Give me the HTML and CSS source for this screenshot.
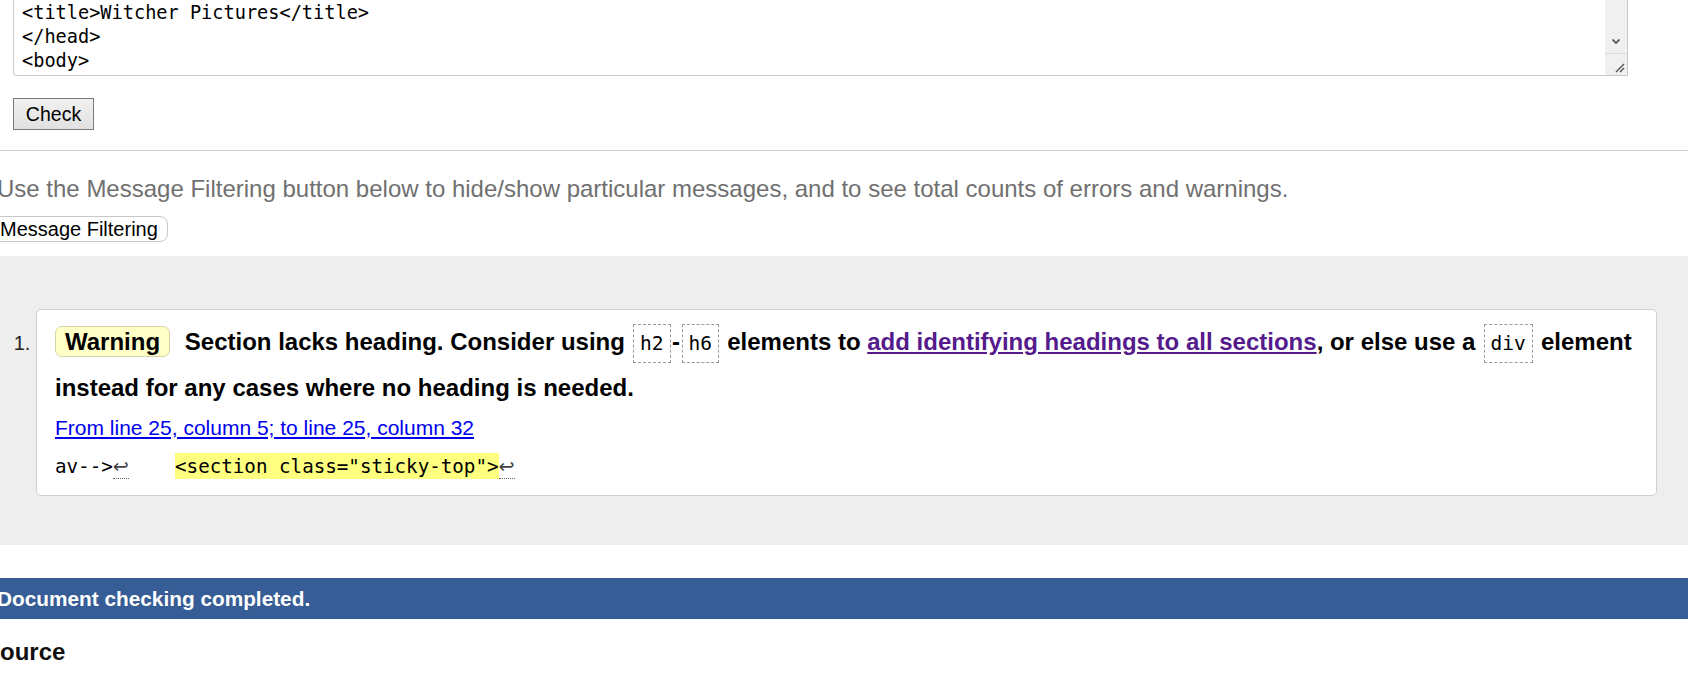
FILE: index.html
```html
<!DOCTYPE html>
<html lang="en">
<head>
<meta charset="utf-8">
<title>Nu Html Checker</title>
<link rel="stylesheet" href="styles.css">
</head>
<body>
<div class="page">
  <form class="checker">
    <div class="editor">
      <div class="editor-lines">
        <div class="ln">&lt;title&gt;Witcher Pictures&lt;/title&gt;</div>
        <div class="ln">&lt;/head&gt;</div>
        <div class="ln">&lt;body&gt;</div>
      </div>
      <div class="editor-scroll">
        <div class="scroll-track">
          <svg class="chev" width="10" height="7" viewBox="0 0 10 7"><path d="M1.5 1.5 L5 5 L8.5 1.5" fill="none" stroke="#606060" stroke-width="1.8"/></svg>
        </div>
        <div class="resizer">
          <svg width="21" height="21" viewBox="0 0 21 21"><path d="M18 10 L10 18 M18 14 L14 18" stroke="#555" stroke-width="1.4" fill="none"/></svg>
        </div>
      </div>
    </div>
    <button type="button" class="check-btn">Check</button>
  </form>
  <hr class="rule">
  <p class="filter-note">Use the Message Filtering button below to hide/show particular messages, and to see total counts of errors and warnings.</p>
  <button type="button" class="filter-btn">Message Filtering</button>
  <div class="results">
    <ol class="messages">
      <li class="msg-card">
        <p class="msg"><span class="badge">Warning</span> <span>Section lacks heading. Consider using <code class="kw">h2</code>-<code class="kw">h6</code> elements to <a class="doc-link" href="#">add identifying headings to all sections</a>, or else use a <code class="kw">div</code> element instead for any cases where no heading is needed.</span></p>
        <p class="location"><a class="loc-link" href="#">From line 25, column 5; to line 25, column 32</a></p>
        <p class="extract"><code>av--&gt;<span class="lf">↩</span>    <b class="hl">&lt;section class="sticky-top"&gt;</b><span class="lf">↩</span></code></p>
      </li>
    </ol>
  </div>
  <p class="done">Document checking completed.</p>
  <h2 class="source-h">Source</h2>
</div>
</body>
</html>
```
FILE: styles.css
```css
html, body {
  margin: 0;
  padding: 0;
  background: #fff;
  overflow: hidden;
}
body {
  font-family: "Liberation Sans", Arial, sans-serif;
  color: #000;
}
.page {
  margin-left: -3px;
}
.checker {
  padding-left: 16px;
}
.editor {
  box-sizing: border-box;
  width: 1615px;
  height: 76px;
  border: 1px solid #c9c9c9;
  border-top: none;
  border-bottom-left-radius: 4px;
  display: flex;
  background: #fff;
}
.editor-lines {
  flex: 1;
  padding: 1px 0 0 8px;
  font-family: "DejaVu Sans Mono", monospace;
  font-size: 18.6px;
  line-height: 24px;
}
.ln {
  white-space: pre;
  height: 24px;
}
.editor-scroll {
  width: 22px;
  display: flex;
  flex-direction: column;
  background: #f0f0f0;
}
.scroll-track {
  height: 54px;
  display: flex;
  align-items: flex-end;
  justify-content: center;
  padding-bottom: 8px;
  box-sizing: border-box;
  border-bottom: 1px solid #dcdcdc;
}
.resizer {
  flex: 1;
  background: #f0f0f0;
  display: flex;
  align-items: flex-end;
  justify-content: flex-end;
}
.resizer svg {
  display: block;
}
.check-btn {
  display: block;
  margin-top: 22px;
  width: 81px;
  height: 32px;
  padding: 0;
  font-family: "Liberation Sans", Arial, sans-serif;
  font-size: 19.5px;
  color: #000;
  background: linear-gradient(#f0f0f0, #e1e1e1);
  border: 1px solid #7a7a7a;
  border-radius: 0;
}
.rule {
  margin: 20px 0 0;
  border: none;
  border-top: 1px solid #cccccc;
  height: 0;
}
.filter-note {
  margin: 24px 0 0;
  font-size: 24px;
  line-height: 27px;
  color: #707070;
}
.filter-btn {
  display: block;
  margin: 14px 0 0 -4px;
  height: 26px;
  padding: 0 9px 0 6px;
  font-family: "Liberation Sans", Arial, sans-serif;
  font-size: 20px;
  line-height: 24px;
  color: #000;
  background: #fff;
  border: 1px solid #c8c8c8;
  border-radius: 8px;
}
.results {
  margin-top: 14px;
  background: #eeeeee;
  padding: 53px 31px 49px 0;
}
.messages {
  margin: 0;
  padding-left: 39px;
  font-size: 20px;
  color: #222;
}
.msg-card {
  background: #fff;
  border: 1px solid #cfcfcf;
  border-radius: 5px;
  padding: 10px 18px 16px;
}
.msg {
  margin: 0;
  font-size: 24px;
  font-weight: bold;
  line-height: 44px;
  color: #000;
}
.badge {
  display: inline-block;
  padding: 0 9px;
  line-height: 29px;
  background: #ffffc8;
  border: 1px solid #d8d3a6;
  border-radius: 7px;
  margin-right: 8px;
}
.kw {
  font-family: "DejaVu Sans Mono", monospace;
  font-weight: normal;
  font-size: 19.5px;
  padding: 7px 6px;
  margin: 0 1.5px;
  border: 1px dashed #9a9a9a;
}
.doc-link {
  color: #551a8b;
}
.location {
  margin: 6px 0 0;
  font-size: 21px;
  line-height: 24px;
}
.loc-link {
  color: #0000ee;
}
.extract {
  margin: 14px 0 0;
  line-height: 25px;
}
.extract code {
  font-family: "DejaVu Sans Mono", monospace;
  font-size: 19.2px;
  white-space: pre;
  color: #000;
}
.hl {
  font-weight: normal;
  background: #ffff80;
  padding: 2px 0 1px;
}
.lf {
  font-family: "DejaVu Sans", sans-serif;
  color: #444;
  border-bottom: 1px dotted #666;
}
.done {
  margin: 33px 0 0;
  height: 41px;
  line-height: 41px;
  background: #365d95;
  color: #fff;
  font-size: 20.8px;
  font-weight: bold;
}
.source-h {
  margin: 19px 0 0 -13px;
  font-size: 24px;
  line-height: 28px;
  color: #111;
}
```
